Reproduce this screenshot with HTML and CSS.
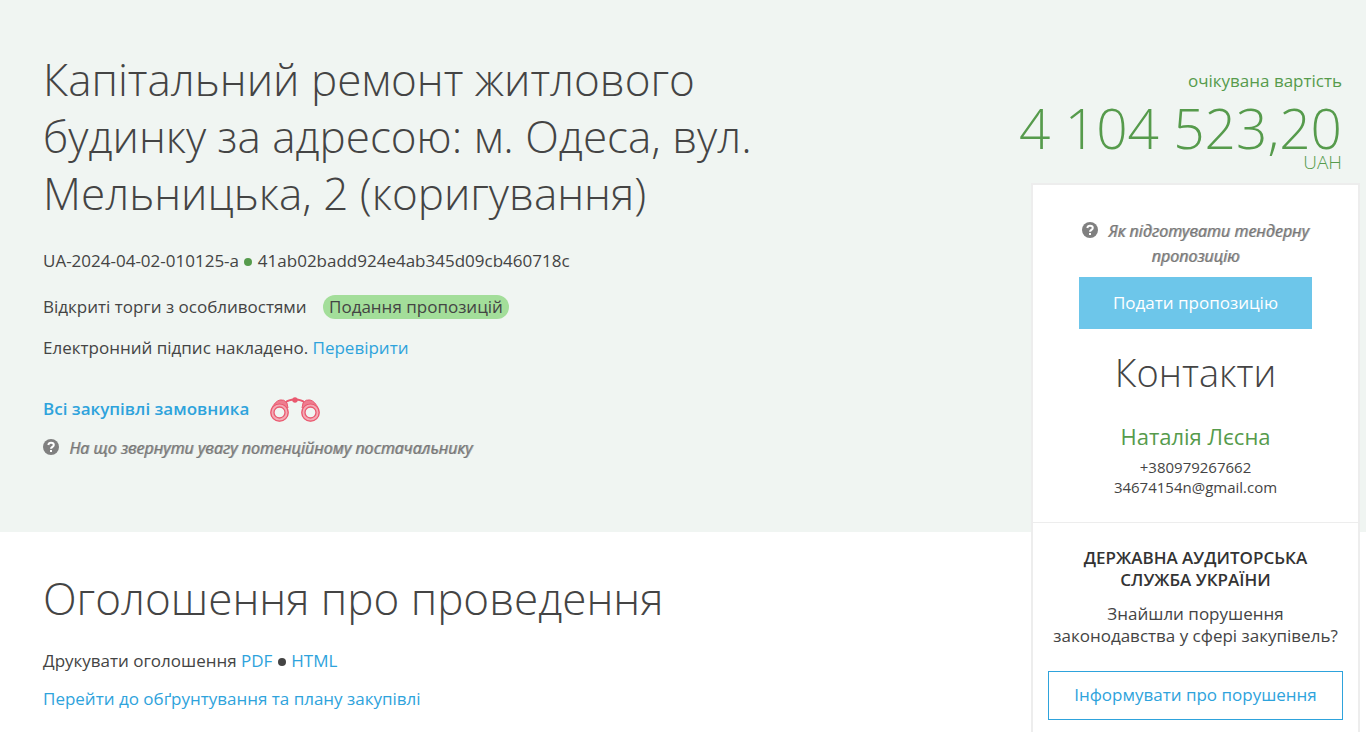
FILE: index.html
```html
<!DOCTYPE html>
<html lang="uk">
<head>
    <meta charset="UTF-8">
    <meta name="viewport" content="width=device-width, initial-scale=1.0">
    <title>Капітальний ремонт житлового будинку</title>
    <link rel="stylesheet" href="styles.css">
</head>
<body>

<div class="tender">
    <header class="tender-head">
        <h1>Капітальний ремонт житлового будинку за адресою: м. Одеса, вул. Мельницька, 2 (коригування)</h1>
        <p class="tender-id">UA-2024-04-02-010125-a <span class="dot green"></span> 41ab02badd924e4ab345d09cb460718c</p>
        <p class="tender-type">Відкриті торги з особливостями <span class="status">Подання пропозицій</span></p>
        <p class="tender-sign">Електронний підпис накладено. <a href="#">Перевірити</a></p>
        <div class="tender-all">
            <a href="#">Всі закупівлі замовника</a>
            <svg class="binoculars" width="50" height="26" viewBox="0 0 50 26" fill="none" stroke="#e9596f">
                <path d="M1.500 12Q5 4 10 3Q14 2 17 6L18 11Q10 3 1.500 12ZM48.500 12Q45 4 40 3Q36 2 33 6L32 11Q40 3 48.500 12Z" fill="#ee7d8f" stroke-width="1"/>
                <path d="M16 5Q18 3 25 2.500Q32 3 34 5" stroke-width="1.800"/>
                <circle cx="25" cy="3" r="2.700" fill="#e9596f" stroke="none"/>
                <circle cx="9.500" cy="15.500" r="7.200" stroke="#f4aab5" stroke-width="4"/>
                <circle cx="9.500" cy="15.500" r="8.700" stroke-width="1.300"/>
                <circle cx="9.500" cy="15.500" r="5.500" stroke-width="1.300" fill="#f0f5f2"/>
                <circle cx="40.500" cy="15.500" r="7.200" stroke="#f4aab5" stroke-width="4"/>
                <circle cx="40.500" cy="15.500" r="8.700" stroke-width="1.300"/>
                <circle cx="40.500" cy="15.500" r="5.500" stroke-width="1.300" fill="#f0f5f2"/>
            </svg>
        </div>
        <a href="#" class="hint">
            <svg class="question" width="16" height="16" viewBox="0 0 16 16">
                <circle cx="8" cy="8" r="8" fill="#808080"/>
                <path d="M5.300 6Q5.700 3.700 8 3.700Q10.800 3.700 10.800 6Q10.800 7.200 9.300 8Q8 8.700 8 9.800" fill="none" stroke="#fff" stroke-width="2"/>
                <rect x="7" y="11" width="2" height="2" fill="#fff"/>
            </svg>
            На що звернути увагу потенційному постачальнику
        </a>
    </header>

    <section class="announcement">
        <h2>Оголошення про проведення</h2>
        <p>Друкувати оголошення <a href="#">PDF</a> <span class="dot"></span> <a href="#">HTML</a></p>
        <p><a href="#">Перейти до обґрунтування та плану закупівлі</a></p>
    </section>

    <aside class="sidebar">
        <div class="price">
            <p class="price-label">очікувана вартість</p>
            <p class="price-value">4 104 523,20</p>
            <p class="price-currency">UAH</p>
        </div>
        <div class="card">
            <div class="contacts">
                <a href="#" class="hint">
                    <svg class="question" width="16" height="16" viewBox="0 0 16 16">
                        <circle cx="8" cy="8" r="8" fill="#808080"/>
                        <path d="M5.300 6Q5.700 3.700 8 3.700Q10.800 3.700 10.800 6Q10.800 7.200 9.300 8Q8 8.700 8 9.800" fill="none" stroke="#fff" stroke-width="2"/>
                        <rect x="7" y="11" width="2" height="2" fill="#fff"/>
                    </svg>
                    Як підготувати тендерну пропозицію
                </a>
                <button type="button" class="btn-offer">Подати пропозицію</button>
                <h3>Контакти</h3>
                <p class="contact-name">Наталія Лєсна</p>
                <p class="contact-line">+380979267662</p>
                <p class="contact-line">34674154n@gmail.com</p>
            </div>
            <div class="audit">
                <h4>ДЕРЖАВНА АУДИТОРСЬКА СЛУЖБА УКРАЇНИ</h4>
                <p>Знайшли порушення законодавства у сфері закупівель?</p>
                <button type="button" class="btn-report">Інформувати про порушення</button>
            </div>
        </div>
    </aside>
</div>

</body>
</html>
```
FILE: styles.css
```css
* {
    box-sizing: border-box;
}
body {
    margin: 0;
    font-family: "Open Sans", sans-serif;
    font-size: 17px;
    line-height: 24px;
    color: #444;
    background-color: #fff;
}
h1, h2, h3, h4, p {
    margin: 0;
}
h1, h2 {
    font-size: 44px;
    font-weight: 300;
    line-height: 57px;
}
a {
    color: #2ea3dc;
    text-decoration: none;
}

.tender {
    display: grid;
    grid-template-columns: 1fr 335px;
    grid-template-rows: auto 1fr;
    min-height: 100vh;
}

/* Header band goes under the sidebar */
.tender-head {
    grid-column: 1 / 3;
    grid-row: 1;
    padding: 51px 352px 72px 43px;
    background-color: #f0f5f2;
}
.tender-head h1 {
    max-width: 740px;
}
.tender-id {
    margin-top: 27px;
}
.tender-type {
    margin-top: 22px;
}
.tender-sign {
    margin-top: 17px;
}
.dot {
    display: inline-block;
    width: 8px;
    height: 8px;
    margin: 0 1px;
    border-radius: 50%;
    background-color: #444;
    vertical-align: 1px;
}
.dot.green {
    background-color: #569b4c;
}
.status {
    display: inline-block;
    margin-left: 12px;
    padding: 0 6px;
    border-radius: 12px;
    background-color: #a3de9a;
}
.tender-all {
    display: flex;
    align-items: flex-start;
    gap: 21px;
    margin-top: 37px;
    font-weight: 600;
}
.hint {
    color: #777;
    font-size: 16px;
    font-style: italic;
    font-weight: 400;
    text-shadow: 1px 0 rgba(119, 119, 119, 0.6);
}
.question {
    margin-right: 6px;
    vertical-align: -1px;
}
.tender-head .hint {
    display: block;
    margin-top: 13px;
}

.announcement {
    grid-column: 1;
    grid-row: 2;
    padding: 38px 24px 20px 43px;
}
.announcement h2 {
    margin-bottom: 22px;
}
.announcement p {
    margin-bottom: 14px;
}

.sidebar {
    grid-column: 2;
    grid-row: 1 / 3;
    display: flex;
    flex-direction: column;
    margin-right: 6px;
    padding-top: 69px;
}
.price {
    margin-bottom: 12px;
    padding-right: 18px;
    text-align: right;
    white-space: nowrap;
    color: #569b4c;
}
.price-value {
    display: flex;
    justify-content: flex-end;
    margin-top: 10px;
    font-size: 55px;
    font-weight: 300;
    line-height: 50px;
}
.price-currency {
    font-size: 19px;
    font-weight: 300;
    line-height: 18px;
}
.card {
    flex: 1;
    border: 2px solid #ededed;
    border-bottom: 0;
    background-color: #fff;
    text-align: center;
}
.contacts {
    padding: 34px 46px 25px;
    border-bottom: 1px solid #ededed;
}
.contacts .hint {
    display: block;
    line-height: 25px;
    margin-bottom: 8px;
}
.btn-offer, .btn-report {
    width: 100%;
    padding: 0 0 2px;
    font-family: inherit;
    font-size: 17px;
    cursor: pointer;
}
.btn-offer {
    height: 52px;
    border: 0;
    background-color: #6dc6ea;
    color: #fff;
}
.contacts h3 {
    margin-top: 17px;
    font-size: 38px;
    font-weight: 300;
    line-height: 52px;
}
.contact-name {
    margin: 23px 0 6px;
    font-size: 22px;
    line-height: 30px;
    color: #569b4c;
}
.contact-line {
    font-size: 15px;
    line-height: 20px;
}
.audit {
    padding: 24px 15px;
    line-height: 22px;
}
.audit h4 {
    margin: 0 30px 12px;
    color: #333;
    font-size: 17px;
    font-weight: 600;
}
.btn-report {
    height: 49px;
    margin-top: 24px;
    border: 1px solid #2ea3dc;
    background-color: #fff;
    color: #2ea3dc;
}
```
